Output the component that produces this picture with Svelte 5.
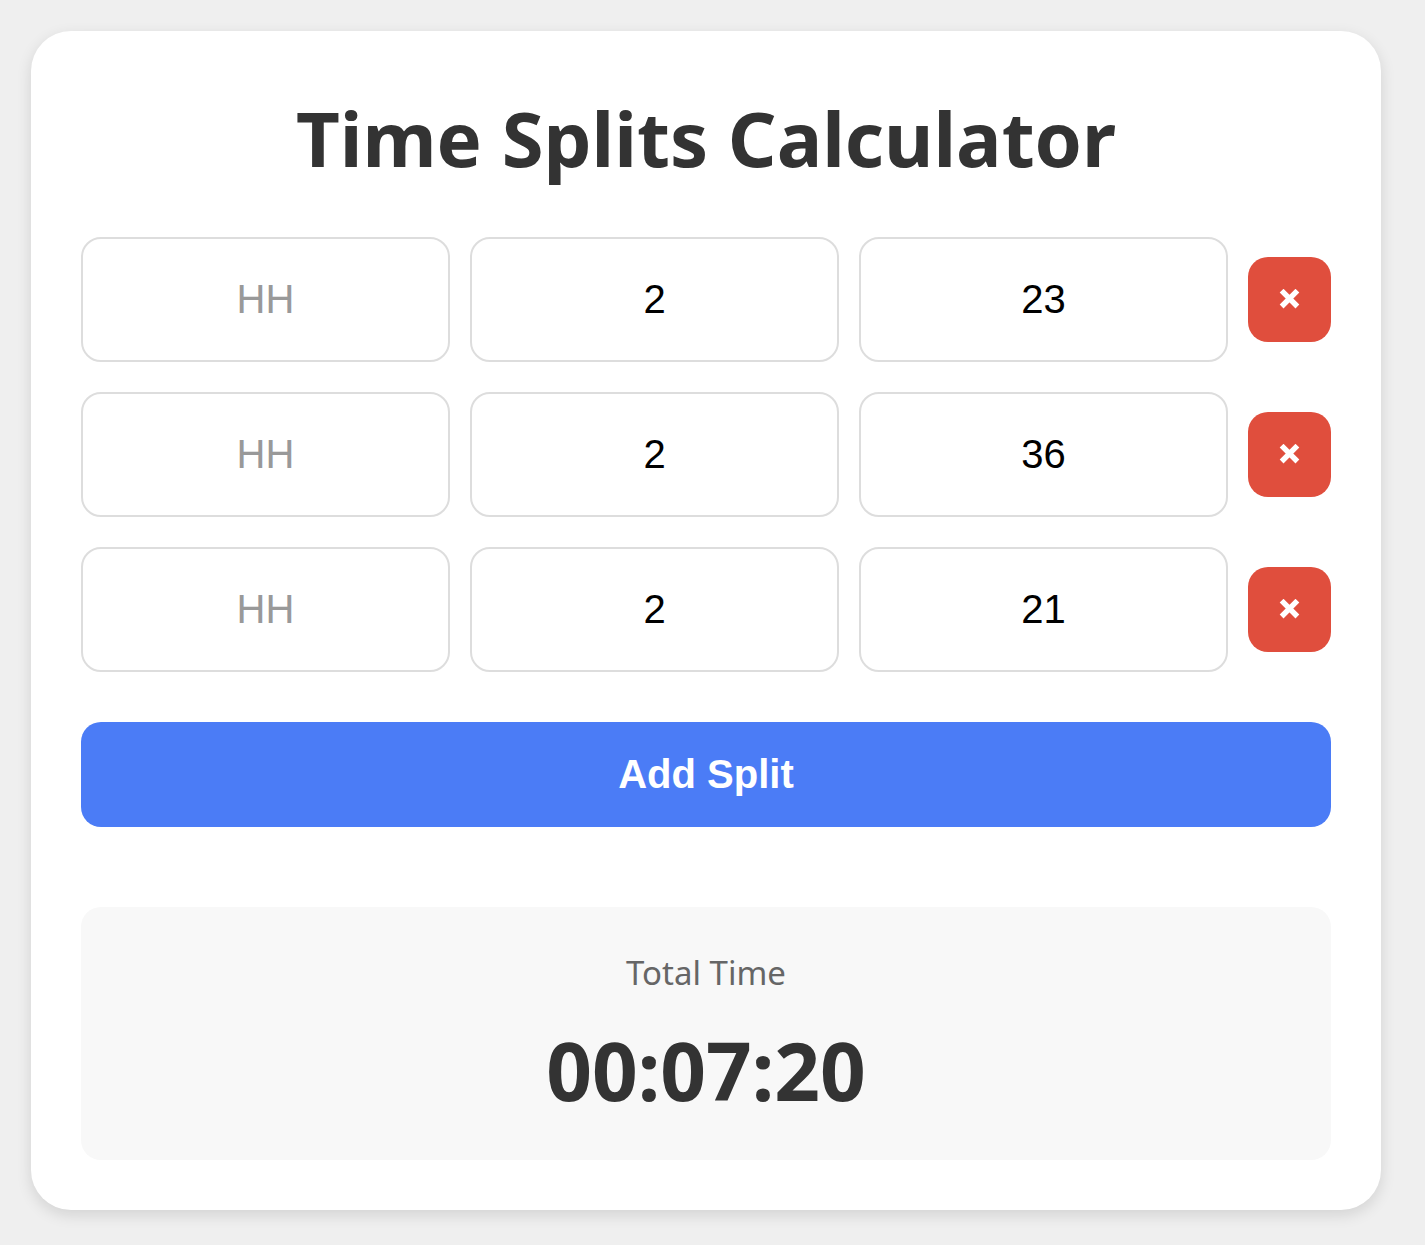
<script>
  let splits = $state([
    { id: 1, h: '', m: '2', s: '23' },
    { id: 2, h: '', m: '2', s: '36' },
    { id: 3, h: '', m: '2', s: '21' }
  ]);
  let nextId = 4;

  const pad = (n) => String(n).padStart(2, '0');
  const total = $derived.by(() => {
    const t = splits.reduce((a, x) => a + Number(x.h) * 3600 + Number(x.m) * 60 + Number(x.s), 0);
    return `${pad(Math.floor(t / 3600))}:${pad(Math.floor(t / 60) % 60)}:${pad(t % 60)}`;
  });

  function add() {
    splits.push({ id: nextId++, h: '', m: '', s: '' });
  }
  function remove(id) {
    splits = splits.filter((x) => x.id !== id);
  }
</script>

<main class="card">
  <h1>Time Splits Calculator</h1>
  <div class="splits">
    {#each splits as split (split.id)}
      <div class="row">
        <input type="text" inputmode="numeric" placeholder="HH" aria-label="Hours" bind:value={split.h} />
        <input type="text" inputmode="numeric" placeholder="MM" aria-label="Minutes" bind:value={split.m} />
        <input type="text" inputmode="numeric" placeholder="SS" aria-label="Seconds" bind:value={split.s} />
        <button class="remove" type="button" aria-label="Remove split" onclick={() => remove(split.id)}>
          <svg viewBox="0 0 21 21" aria-hidden="true"><path d="M2.6 1.7L18.4 17.5M18.4 1.7L2.6 17.5" /></svg>
        </button>
      </div>
    {/each}
  </div>
  <button class="add" type="button" onclick={add}>Add Split</button>
  <section class="result">
    <div class="label">Total Time</div>
    <output class="total">{total}</output>
  </section>
</main>

<style>
  :global(body) {
    background: #efefef;
  }
  .card {
    margin: 31px 44px 35px 31px;
    padding: 50px;
    background: #fff;
    border-radius: 40px;
    box-shadow: 0 5px 15px rgba(0, 0, 0, 0.12);
    font-family: "Noto Sans", "Open Sans", sans-serif;
    color: #333;
    text-align: center;
  }
  h1 {
    margin: 0 0 42px;
    font-size: 76px;
    line-height: 114px;
    font-weight: 700;
  }
  .splits {
    display: flex;
    flex-direction: column;
    gap: 30px;
  }
  .row {
    display: flex;
    align-items: center;
    gap: 20px;
  }
  input {
    box-sizing: border-box;
    flex: 1;
    min-width: 0;
    height: 125px;
    padding: 0 30px;
    border: 2px solid #ddd;
    border-radius: 20px;
    background: #fff;
    color: #000;
    font-family: "Liberation Sans", Arial, sans-serif;
    font-size: 40px;
    text-align: center;
  }
  input::placeholder {
    color: #999;
    opacity: 1;
  }
  button {
    border: 0;
    border-radius: 20px;
    color: #fff;
    cursor: pointer;
  }
  .remove {
    display: grid;
    place-items: center;
    width: 83px;
    height: 85px;
    padding: 0;
    background: #e04e3d;
  }
  .remove svg {
    width: 21px;
    height: 21px;
    fill: none;
    stroke: currentColor;
    stroke-width: 5.4;
  }
  .add {
    width: 100%;
    height: 105px;
    margin-top: 50px;
    background: #4b7cf6;
    font: 700 40px "Liberation Sans", Arial, sans-serif;
  }
  .result {
    margin-top: 80px;
    padding: 40px;
    border-radius: 20px;
    background: #f8f8f8;
  }
  .label {
    margin-bottom: 21px;
    font-size: 33px;
    line-height: 52px;
    color: #666;
  }
  .total {
    display: block;
    font-size: 80px;
    line-height: 100px;
    font-weight: 700;
  }
</style>
